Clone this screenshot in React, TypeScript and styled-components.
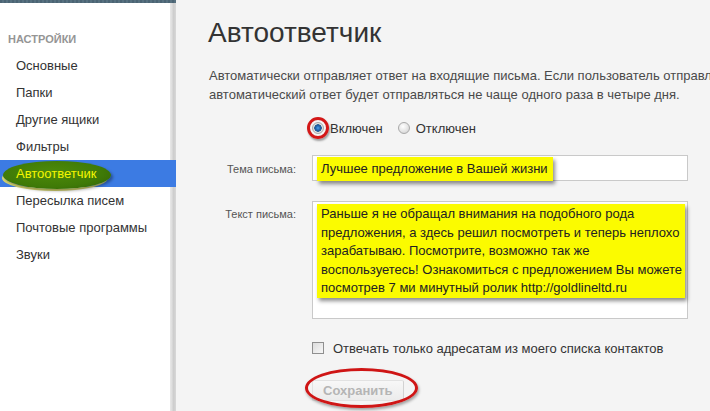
import React from "react";
import styled, { createGlobalStyle } from "styled-components";

const Global = createGlobalStyle`
  html, body { margin: 0; padding: 0; overflow: hidden; background: #f4f4f4; }
  body { font-family: "Liberation Sans", Arial, sans-serif; }
  * { box-sizing: border-box; }
`;

const Page = styled.div`
  display: flex;
  width: 710px;
  height: 411px;
  overflow: hidden;
`;

const Sidebar = styled.aside`
  position: relative;
  width: 170px;
  flex: none;
  background: #ffffff;
  display: flex;
  flex-direction: column;
`;

const TopStrip = styled.div`
  height: 3px;
  width: 176px;
  background: repeating-linear-gradient(90deg, #4b6474 0 2px, #56707f 2px 4px);
`;

const Edge = styled.div`
  width: 6px;
  flex: none;
  background: linear-gradient(to right, #e8e8e8 0, #dedede 30%, #cdcdcd 60%, #d8d8d8 100%);
`;

const SideHeading = styled.div`
  margin: 29px 0 6px 8px;
  font-size: 11px;
  line-height: 14px;
  font-weight: bold;
  color: #959595;
  text-transform: uppercase;
`;

const NavItem = styled.div<{ $active?: boolean }>`
  position: relative;
  height: 27px;
  line-height: 27px;
  padding-left: 16px;
  font-size: 13px;
  color: ${(p) => (p.$active ? "#f4f600" : "#333333")};
  background: ${(p) => (p.$active ? "#3c7be3" : "transparent")};
  width: ${(p) => (p.$active ? "176px" : "auto")};
`;

const NavLabel = styled.span`
  position: relative;
  z-index: 1;
`;

const GreenBlob = styled.span`
  position: absolute;
  left: 3px;
  top: 1px;
  width: 108px;
  height: 28px;
  border-radius: 50%;
  background: radial-gradient(ellipse at 45% 40%, #4d8a0a 0%, #3f7a07 60%, #2f5f05 100%);
  box-shadow: 2px 2px 3px rgba(0, 0, 0, 0.35), -2px 3px 0 -1px #d8d870;
`;

const Main = styled.main`
  flex: 1;
  min-width: 0;
  background: #f4f4f4;
  padding: 17px 0 0 32px;
  overflow: hidden;
`;

const Title = styled.h1`
  margin: 0;
  font-size: 28px;
  line-height: 32px;
  font-weight: normal;
  color: #333333;
`;

const Description = styled.p`
  margin: 17px 0 0 1px;
  font-size: 13px;
  line-height: 19px;
  color: #4a4a4a;
  white-space: nowrap;
`;

const Form = styled.div`
  display: grid;
  grid-template-columns: 88px 376px;
  column-gap: 16px;
  align-items: start;
`;

const FieldLabel = styled.div<{ $top: number }>`
  text-align: right;
  font-size: 11px;
  color: #555555;
  padding-top: ${(p) => p.$top}px;
`;

const RadioRow = styled.div`
  grid-column: 2;
  display: flex;
  align-items: center;
  height: 20px;
  margin: 14px 0 17px;
  font-size: 13px;
  color: #333;
`;

const RadioWrap = styled.span`
  position: relative;
  display: inline-flex;
  margin-right: 6px;
`;

const Radio = styled.span<{ $checked?: boolean }>`
  width: 12px;
  height: 12px;
  border-radius: 50%;
  border: 1px solid #a9a9a9;
  background: ${(p) =>
    p.$checked
      ? "radial-gradient(circle at 50% 50%, #4aa0e8 0, #1d5fa8 2.5px, #2a5f90 3.5px, #e6e6e6 4px, #cfcfcf 100%)"
      : "radial-gradient(circle at 40% 35%, #ffffff 0, #e2e2e2 60%, #c9c9c9 100%)"};
`;

const RedRing = styled.span`
  position: absolute;
  left: -5px;
  top: -5px;
  width: 22px;
  height: 22px;
  border-radius: 50%;
  border: 3px solid #d31717;
  box-shadow: 1px 2px 2px rgba(0, 0, 0, 0.35);
`;

const RadioText = styled.span<{ $gap?: number }>`
  margin-right: ${(p) => p.$gap ?? 0}px;
`;

const InputBox = styled.div<{ $height: number }>`
  height: ${(p) => p.$height}px;
  background: #ffffff;
  border: 1px solid #c9c9c9;
  padding: 1px 0 0 4px;
`;

const Highlight = styled.span`
  display: inline-block;
  background: #fbfb00;
  color: #222;
  font-size: 13px;
  white-space: nowrap;
  box-shadow: 2px 3px 4px rgba(0, 0, 0, 0.45);
`;

const SubjectHighlight = styled(Highlight)`
  height: 24px;
  line-height: 24px;
  padding: 0 5px 0 4px;
`;

const BodyHighlight = styled(Highlight)`
  width: 368px;
  line-height: 18.5px;
  padding: 1px 4px 0 4px;
  margin-top: 1px;
`;

const Row = styled.div<{ $mt: number }>`
  display: contents;
  & > * { margin-top: ${(p) => p.$mt}px; }
`;

const CheckRow = styled.label`
  grid-column: 2;
  display: flex;
  align-items: center;
  height: 16px;
  margin-top: 21px;
  font-size: 13px;
  color: #333;
`;

const Checkbox = styled.span`
  width: 12px;
  height: 12px;
  margin-right: 9px;
  border: 1px solid #8f8f8f;
  background: linear-gradient(135deg, #dcdcdc, #f7f7f7);
`;

const ButtonRow = styled.div`
  grid-column: 2;
  margin-top: 24px;
  display: flex;
`;

const ButtonWrap = styled.span`
  position: relative;
  display: inline-flex;
`;

const SaveButton = styled.button`
  height: 21px;
  padding: 0 10px 0 10px;
  font-family: "Liberation Sans", Arial, sans-serif;
  font-size: 13px;
  font-weight: bold;
  color: #b5b5b5;
  background: linear-gradient(#f7f7f7, #ececec);
  border: 1px solid #e2e2e2;
  border-right-color: #d2d2d2;
  border-radius: 2px;
`;

const RedOval = styled.span`
  position: absolute;
  left: -7px;
  top: -12px;
  width: 113px;
  height: 40px;
  border-radius: 50%;
  border: 3px solid #cf1515;
  box-shadow: 1px 2px 3px rgba(0, 0, 0, 0.35);
  pointer-events: none;
`;

const navItems = [
  "Основные",
  "Папки",
  "Другие ящики",
  "Фильтры",
  "Автоответчик",
  "Пересылка писем",
  "Почтовые программы",
  "Звуки",
];

const bodyLines = [
  "Раньше я не обращал внимания на подобного рода",
  "предложения, а здесь решил посмотреть и теперь неплохо",
  "зарабатываю. Посмотрите, возможно так же",
  "воспользуетесь! Ознакомиться с предложением Вы можете",
  "посмотрев 7 ми минутный ролик http://goldlineltd.ru",
];

export default function App() {
  return (
    <>
      <Global />
      <Page>
        <Sidebar>
          <TopStrip />
          <SideHeading>Настройки</SideHeading>
          {navItems.map((item) => {
            const active = item === "Автоответчик";
            return (
              <NavItem key={item} $active={active}>
                {active && <GreenBlob />}
                <NavLabel>{item}</NavLabel>
              </NavItem>
            );
          })}
        </Sidebar>
        <Edge />
        <Main>
          <Title>Автоответчик</Title>
          <Description>
            Автоматически отправляет ответ на входящие письма. Если пользователь отправляет вам несколько писем,
            <br />
            автоматический ответ будет отправляться не чаще одного раза в четыре дня.
          </Description>
          <Form>
            <RadioRow>
              <RadioWrap>
                <Radio $checked />
                <RedRing />
              </RadioWrap>
              <RadioText $gap={15}>Включен</RadioText>
              <RadioWrap>
                <Radio />
              </RadioWrap>
              <RadioText>Отключен</RadioText>
            </RadioRow>
            <Row $mt={0}>
              <FieldLabel $top={8}>Тема письма:</FieldLabel>
              <InputBox $height={26}>
                <SubjectHighlight>Лучшее предложение в Вашей жизни</SubjectHighlight>
              </InputBox>
            </Row>
            <Row $mt={20}>
              <FieldLabel $top={7}>Текст письма:</FieldLabel>
              <InputBox $height={118}>
                <BodyHighlight>
                  {bodyLines.map((line, i) => (
                    <React.Fragment key={i}>
                      {line}
                      {i < bodyLines.length - 1 && <br />}
                    </React.Fragment>
                  ))}
                </BodyHighlight>
              </InputBox>
            </Row>
            <CheckRow>
              <Checkbox />
              Отвечать только адресатам из моего списка контактов
            </CheckRow>
            <ButtonRow>
              <ButtonWrap>
                <SaveButton>Сохранить</SaveButton>
                <RedOval />
              </ButtonWrap>
            </ButtonRow>
          </Form>
        </Main>
      </Page>
    </>
  );
}
